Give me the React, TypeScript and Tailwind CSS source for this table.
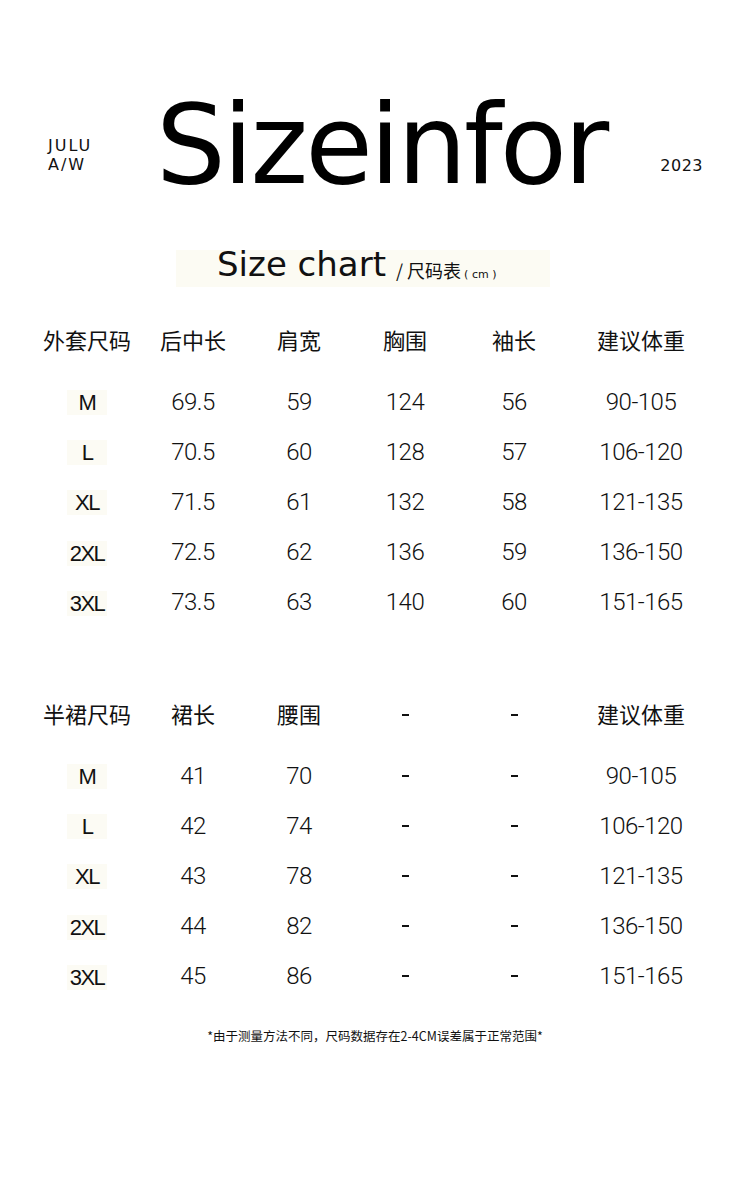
const jacket = {
  head: ['外套尺码', '后中长', '肩宽', '胸围', '袖长', '建议体重'],
  rows: [
    ['M', '69.5', '59', '124', '56', '90-105'],
    ['L', '70.5', '60', '128', '57', '106-120'],
    ['XL', '71.5', '61', '132', '58', '121-135'],
    ['2XL', '72.5', '62', '136', '59', '136-150'],
    ['3XL', '73.5', '63', '140', '60', '151-165'],
  ],
}

const skirt = {
  head: ['半裙尺码', '裙长', '腰围', '-', '-', '建议体重'],
  rows: [
    ['M', '41', '70', '-', '-', '90-105'],
    ['L', '42', '74', '-', '-', '106-120'],
    ['XL', '43', '78', '-', '-', '121-135'],
    ['2XL', '44', '82', '-', '-', '136-150'],
    ['3XL', '45', '86', '-', '-', '151-165'],
  ],
}

const cols = 'grid grid-cols-[106px_106px_106px_106px_112px_142px] pl-[34px]'

function Cell({ value }: { value: string }) {
  if (value === '-') {
    return <span className="block w-[7px] h-[2px] bg-[#111]" />
  }
  return (
    <span className="text-[24px] font-light tracking-[-0.5px] text-[#111] font-['Roboto',sans-serif]">
      {value}
    </span>
  )
}

function SizeTable({ data }: { data: typeof jacket }) {
  return (
    <div className="flex flex-col">
      {/* header */}
      <div className={`${cols} h-[50px]`}>
        {data.head.map((h, i) => (
          <div key={i} className="flex items-center justify-center">
            {h === '-' ? (
              <span className="block w-[7px] h-[2px] bg-[#111]" />
            ) : (
              <span className="text-[22px] leading-none pb-[5px] text-[#111] font-['Noto_Sans_CJK_SC',sans-serif]">{h}</span>
            )}
          </div>
        ))}
      </div>

      <div className="mt-[11px] flex flex-col">
        {data.rows.map((row, r) => (
          <div key={r} className={`${cols} h-[50px]`}>
            {row.map((v, i) => (
              <div key={i} className="flex items-center justify-center">
                {i === 0 ? (
                  <span className={`w-[40px] h-[25px] bg-[#fcfbf4] flex items-center justify-center text-[22px] tracking-[-1.5px] text-[#111] font-['Liberation_Sans',Arial,sans-serif] ${r >= 3 ? 'mt-[3px]' : ''}`}>
                    {v}
                  </span>
                ) : (
                  <Cell value={v} />
                )}
              </div>
            ))}
          </div>
        ))}
      </div>
    </div>
  )
}

export default function App() {
  return (
    <div className="w-[750px] h-[1181px] bg-white flex flex-col overflow-hidden">
      {/* Title */}
      <div className="flex pt-[90px] pl-[48px] h-[232px]">
        <div className="w-[108px] pt-[46px] text-[16px] leading-[19px] tracking-[2px] text-[#111] font-['DejaVu_Sans',sans-serif]">
          <div>JULU</div>
          <div>A/W</div>
        </div>
        <div className="text-[110px] leading-none tracking-[-3px] text-black font-['DejaVu_Sans',sans-serif]">
          Sizeinfor
        </div>
        <div className="ml-auto mr-[47px] pt-[68px] text-[16px] leading-none tracking-[0.5px] text-[#111] font-['DejaVu_Sans',sans-serif]">
          2023
        </div>
      </div>

      {/* Subtitle band */}
      <div className="ml-[176px] w-[374px] h-[37px] mt-[18px] bg-[#fcfbf3] flex items-end pl-[41px] pb-[6px] gap-[10px]">
        <span className="text-[34px] leading-none text-[#111] font-['DejaVu_Sans',sans-serif]">Size chart</span>
        <span className="text-[18px] leading-none text-[#111] font-['Noto_Sans_CJK_SC',sans-serif] mb-[1px]">
          / 尺码表
          <span className="text-[11px] ml-[3px] font-['DejaVu_Sans',sans-serif]">( cm )</span>
        </span>
      </div>

      <div className="mt-[29px]">
        <SizeTable data={jacket} />
      </div>

      <div className="mt-[63px]">
        <SizeTable data={skirt} />
      </div>

      <div className="mt-[26px] text-center text-[12.5px] text-[#111] font-['Noto_Sans_CJK_SC',sans-serif]">
        *由于测量方法不同，尺码数据存在2-4CM误差属于正常范围*
      </div>
    </div>
  )
}
